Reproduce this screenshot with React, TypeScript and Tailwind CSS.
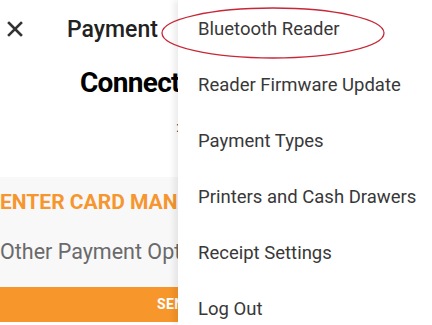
import React from 'react'

const menuItems = [
  'Bluetooth Reader',
  'Reader Firmware Update',
  'Payment Types',
  'Printers and Cash Drawers',
  'Receipt Settings',
  'Log Out',
]

export default function App() {
  return (
    <div
      className="relative w-[432px] h-[325px] overflow-hidden bg-white"
      style={{ fontFamily: 'Roboto, "Noto Sans", sans-serif' }}
    >
      {/* underlying payment screen */}
      <div className="flex flex-col h-full">
        <div className="h-[60px] shrink-0 flex items-center">
          <svg className="ml-[7px] mt-[-2px]" width="16" height="16" viewBox="0 0 16 16">
            <path d="M2 2 L14 14 M14 2 L2 14" stroke="#333" strokeWidth="2.6" strokeLinecap="square" />
          </svg>
          <span className="ml-[44px] text-[23px] font-medium text-[#222]">Payment</span>
        </div>
        <div className="h-[46px] shrink-0 pl-[80px] flex items-center">
          <span className="text-[28px] font-bold text-black tracking-tight whitespace-nowrap">Connect Reader</span>
        </div>
        <div className="h-[71px] shrink-0 pl-[176px] pt-[14px] text-[15px] text-[#444] leading-none">:</div>
        <div className="flex-1 flex flex-col bg-[#f8f8f9]">
          <div className="h-[52px] shrink-0 flex items-center">
            <span className="text-[21px] font-bold text-[#f5962e] whitespace-nowrap">ENTER CARD MANUALLY</span>
          </div>
          <div className="h-[46px] shrink-0 flex items-center">
            <span className="text-[21.5px] text-[#6a6a6a] whitespace-nowrap">Other Payment Options</span>
          </div>
          <div className="h-[12px] shrink-0" />
          <div className="h-[35px] shrink-0 bg-[#f7962a] flex items-center pl-[157px]">
            <span className="text-[14px] font-bold text-white tracking-wide">SEND</span>
          </div>
          <div className="flex-1 bg-white" />
        </div>
      </div>

      {/* overflow menu */}
      <div className="absolute top-0 right-0 h-full w-[254px] pt-[2px] bg-white shadow-[-4px_0_6px_rgba(0,0,0,0.08)] flex flex-col">
        {menuItems.map((item) => (
          <div key={item} className="h-[56px] shrink-0 flex items-center pl-[20px] text-[18.5px] text-[#383838] whitespace-nowrap">
            {item}
          </div>
        ))}
      </div>

      {/* red annotation ring */}
      <svg className="absolute left-0 top-0" width="432" height="325">
        <ellipse cx="273" cy="33" rx="111" ry="25" fill="none" stroke="#c62838" strokeWidth="1.3" />
      </svg>
    </div>
  )
}
